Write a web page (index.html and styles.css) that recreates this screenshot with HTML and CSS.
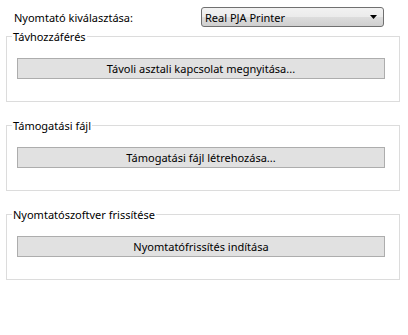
FILE: index.html
```html
<!DOCTYPE html>
<html lang="hu">

<head>
    <meta charset="UTF-8">
    <meta name="viewport" content="width=device-width, initial-scale=1.0">
    <title>Nyomtató</title>
    <link rel="stylesheet" href="styles.css">
</head>

<body>
    <div class="printer-row">
        <span class="printer-label">Nyomtató kiválasztása:</span>
        <div class="combo">
            <span class="combo-text">Real PJA Printer</span>
            <svg class="combo-arrow" width="7" height="4" viewBox="0 0 7 4">
                <path d="M0 0H7L3.5 4Z" fill="#000" />
            </svg>
        </div>
    </div>

    <fieldset class="group">
        <legend>Távhozzáférés</legend>
        <button class="wide-btn">Távoli asztali kapcsolat megnyitása...</button>
    </fieldset>

    <fieldset class="group">
        <legend>Támogatási fájl</legend>
        <button class="wide-btn">Támogatási fájl létrehozása...</button>
    </fieldset>

    <fieldset class="group">
        <legend>Nyomtatószoftver frissítése</legend>
        <button class="wide-btn">Nyomtatófrissítés indítása</button>
    </fieldset>
</body>

</html>
```

FILE: styles.css
```css
body {
    margin: 0;
    background: #fff;
    font-family: "Noto Sans", "DejaVu Sans", sans-serif;
    font-size: 11px;
    color: #000;
}

.printer-row {
    display: flex;
    align-items: center;
    padding: 7px 0 0 14px;
    height: 20px;
}

.printer-label {
    width: 187px;
}

.combo {
    box-sizing: border-box;
    width: 183px;
    height: 20px;
    border: 1px solid #707070;
    border-radius: 3px;
    background: linear-gradient(#f2f2f2, #ebebeb 50%, #dddddd 50%, #cfcfcf);
    display: flex;
    align-items: center;
    justify-content: space-between;
    padding: 0 6px 0 3px;
}

.group {
    margin: 2px 8px 0 6px;
    padding: 0 5px 22px 5px;
    border: 1px solid #dcdcdc;
}

.group + .group {
    margin-top: 16px;
}

.group legend {
    padding: 0 1px;
    line-height: 15px;
}

.wide-btn {
    display: block;
    box-sizing: border-box;
    width: 368px;
    height: 21px;
    margin: 14px 0 0 5px;
    border: 1px solid #adadad;
    background: #e1e1e1;
    font-family: inherit;
    font-size: 11px;
    color: #000;
    padding: 0;
}
```
